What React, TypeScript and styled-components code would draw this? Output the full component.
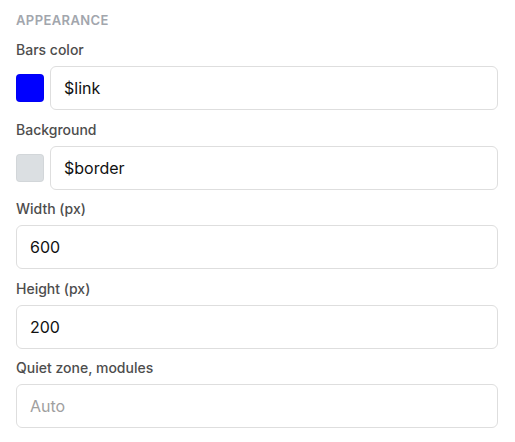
import React from "react";
import styled, { createGlobalStyle } from "styled-components";

const Global = createGlobalStyle`
  html, body {
    margin: 0;
    padding: 0;
    background: #ffffff;
    font-family: Inter, "Noto Sans", sans-serif;
  }
`;

const Panel = styled.div`
  padding: 12px 17px 0 16px;
  width: 515px;
  box-sizing: border-box;
`;

const SectionTitle = styled.div`
  font-size: 13px;
  line-height: 16px;
  font-weight: 600;
  letter-spacing: 0.4px;
  text-transform: uppercase;
  color: #a2a6ad;
  margin-bottom: 12px;
`;

const Field = styled.div`
  margin-bottom: 9.5px;
`;

const Label = styled.label`
  display: block;
  font-size: 14px;
  line-height: 20px;
  font-weight: 500;
  color: #4d4d4d;
  margin-bottom: 6px;
`;

const Row = styled.div`
  display: flex;
  align-items: center;
  gap: 6px;
`;

const Swatch = styled.div<{ $color: string }>`
  flex: none;
  width: 28px;
  height: 28px;
  border-radius: 4px;
  background: ${(p) => p.$color};
  box-shadow: inset 0 0 0 1px rgba(0, 0, 0, 0.04);
`;

const Input = styled.input`
  flex: 1;
  width: 100%;
  min-width: 0;
  height: 44px;
  box-sizing: border-box;
  border: 1px solid #dedede;
  border-radius: 6px;
  padding: 0 13px;
  font-family: Inter, "Noto Sans", sans-serif;
  font-size: 16px;
  color: #111;
  background: #fff;
  outline: none;

  &::placeholder {
    color: #a0a0a0;
  }
`;

const fields = [
  { label: "Bars color", value: "$link", swatch: "#0000ff" },
  { label: "Background", value: "$border", swatch: "#dbdfe2" },
  { label: "Width (px)", value: "600" },
  { label: "Height (px)", value: "200" },
  { label: "Quiet zone, modules", value: "", placeholder: "Auto" },
];

export default function App() {
  return (
    <>
      <Global />
      <Panel>
        <SectionTitle>Appearance</SectionTitle>
        {fields.map((f) => (
          <Field key={f.label}>
            <Label>{f.label}</Label>
            {f.swatch ? (
              <Row>
                <Swatch $color={f.swatch} />
                <Input defaultValue={f.value} />
              </Row>
            ) : (
              <Input defaultValue={f.value} placeholder={f.placeholder} />
            )}
          </Field>
        ))}
      </Panel>
    </>
  );
}
